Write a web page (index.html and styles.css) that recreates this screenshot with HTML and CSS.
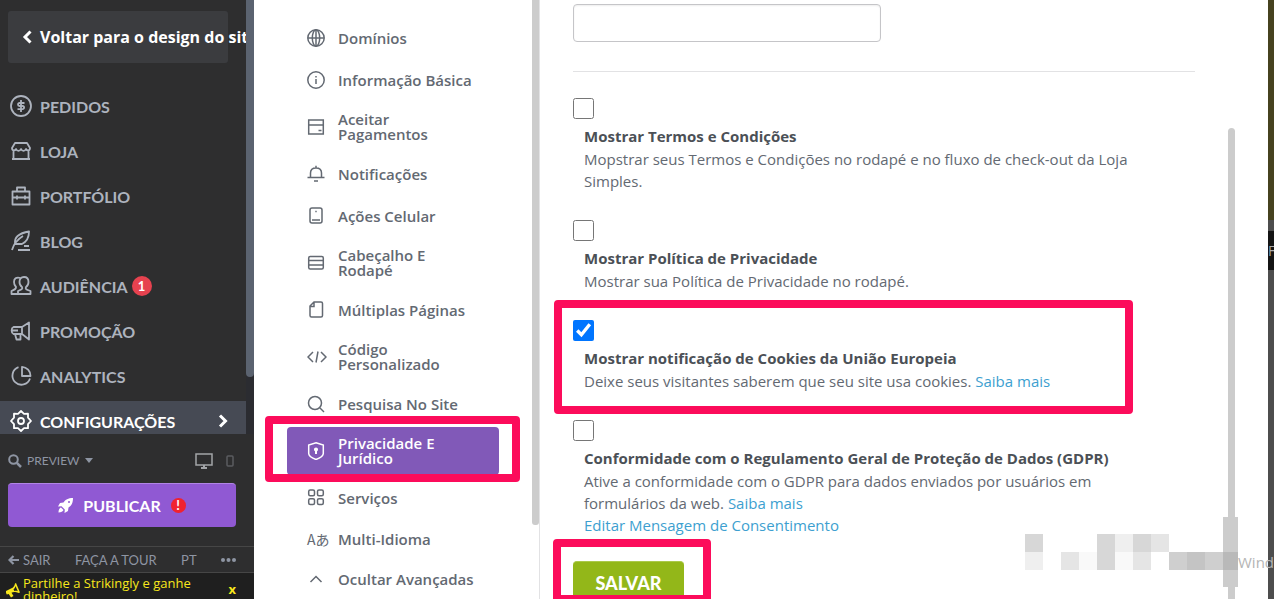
FILE: index.html
```html
<!DOCTYPE html>
<html lang="pt">
<head>
  <meta charset="UTF-8" />
  <meta name="viewport" content="width=device-width, initial-scale=1.0" />
  <title>Configurações - Privacidade e Jurídico</title>
  <link rel="stylesheet" href="styles.css">
</head>
<body>
  <div class="app">
    <aside class="sidebar">
      <div class="sidebar-scroll">
        <div class="sidebar-main">
          <a class="back-btn" href="#">
            <svg width="10" height="14" viewBox="0 0 10 14"><path d="M8.500 1.500 3 7l5.500 5.500" fill="none" stroke="currentColor" stroke-width="3"/></svg>
            Voltar para o design do site
          </a>
          <nav class="main-nav">
            <a href="#">
              <svg class="nav-icon" viewBox="0 0 22 22"><circle cx="11" cy="11" r="10"/><path d="M14.500 8H9.500a1.500 1.500 0 0 0 0 3h3a1.500 1.500 0 0 1 0 3.200H7.500M11 5v12"/></svg>
              PEDIDOS
            </a>
            <a href="#">
              <svg class="nav-icon" viewBox="0 0 22 22"><path d="M5 3h12l3 5c0 3-3 3-4 1-1 2.500-4 2.500-5 0-1 2.500-4 2.500-5 0-1 2-4 2-4-1zM3.500 10.500V19h15v-8.500M2 19h18"/></svg>
              LOJA
            </a>
            <a href="#">
              <svg class="nav-icon" viewBox="0 0 22 22"><path d="M2.500 6.500h17v13h-17zM7 6V2.500h8V6M2.500 12.500h17M7 10.500v4M15 10.500v4"/></svg>
              PORTFÓLIO
            </a>
            <a href="#">
              <svg class="nav-icon" viewBox="0 0 22 22"><path d="M2 20C4 13 8 9 13 6M5 14C4 7 10 3 19 1.500c0 5-2 10-7 12.500H5M14 16h5M8 20h12"/></svg>
              BLOG
            </a>
            <a href="#">
              <svg class="nav-icon" viewBox="0 0 22 22"><path d="M14 2c3 0 4.500 2 4.500 5 0 2-1 4-2.500 5-1 2 0 2.500 4.500 4v3H8v-3c3.500-1.500 5-2 4-4-1.500-1-2.500-3-2.500-5 0-3 1.500-5 4.500-5zM10.500 3C6 1.500 4 4 4 7c0 2 1 4 2 5 0 2-1 2.500-4.500 4v3H8"/></svg>
              AUDIÊNCIA <span class="badge">1</span>
            </a>
            <a href="#">
              <svg class="nav-icon" viewBox="0 0 22 22"><path d="M12 7H3.500C1 8 1 13 3.500 14H12M12 7l7-4.500v17L12 14zM5 14l1.500 5.500h4V14M2 10.500h6"/></svg>
              PROMOÇÃO
            </a>
            <a href="#">
              <svg class="nav-icon" viewBox="0 0 22 22"><path d="M8.500 2.200A9 9 0 1 0 20 13.500M12 1.800V11h8.500A9 9 0 0 0 12 1.800z"/></svg>
              ANALYTICS
            </a>
            <a class="active" href="#">
              <svg class="nav-icon" viewBox="0 0 22 22"><path d="M11 1l3 2.800 4-.1v4L21 11l-3 3.200v4l-4 0L11 21l-3-2.800-4 0v-4L1 11l3-3.300v-4l4 .1z"/><circle cx="11" cy="11" r="3"/></svg>
              CONFIGURAÇÕES
              <svg class="nav-arrow" width="10" height="14" viewBox="0 0 10 14"><path d="M2 1.500 7.500 7 2 12.500" fill="none" stroke="currentColor" stroke-width="3"/></svg>
            </a>
          </nav>
        </div>
        <div class="sidebar-track"><div class="sidebar-thumb"></div></div>
      </div>

      <div class="sidebar-bottom">
        <div class="preview-row">
          <button class="preview-btn">
            <svg width="14" height="14" viewBox="0 0 14 14"><circle cx="5.500" cy="5.500" r="4.300" fill="none" stroke="currentColor" stroke-width="2"/><path d="M8.800 8.800 13 13" stroke="currentColor" stroke-width="2.500"/></svg>
            PREVIEW
            <svg width="8" height="5" viewBox="0 0 8 5"><path d="M0 0h8L4 5z" fill="currentColor"/></svg>
          </button>
          <button class="device-btn" aria-label="Desktop">
            <svg width="18" height="16" viewBox="0 0 18 16"><path d="M1 1h16v11H1z" fill="none" stroke="currentColor" stroke-width="1.500"/><path d="M8 12h2v2h2v2H6v-2h2z" fill="currentColor"/></svg>
          </button>
          <button class="device-btn mobile" aria-label="Celular">
            <svg width="8" height="12" viewBox="0 0 8 12"><rect x="1" y="1" width="6" height="10" rx="1" fill="none" stroke="currentColor" stroke-width="1.500"/></svg>
          </button>
        </div>
        <button class="publish-btn">
          <svg width="15" height="15" viewBox="0 0 15 15" fill="currentColor"><path d="M15 0C10 0 7.500 1.500 5.500 4.500L2 5 0 8.500l3.500-.3 3.300 3.300-.3 3.500L10 13l.5-3.500C13.500 7.500 15 5 15 0zM3 9.500C1.500 10 .5 12 .5 14.500 3 14.500 5 13.500 5.500 12z"/><circle cx="11" cy="4" r="1" fill="#9059d3"/></svg>
          PUBLICAR
          <span class="alert-dot">!</span>
        </button>
        <div class="links-row">
          <a href="#"><svg width="11" height="10" viewBox="0 0 11 10"><path d="M5.500 1 1.500 5l4 4M1.500 5H11" fill="none" stroke="currentColor" stroke-width="2.200"/></svg> SAIR</a>
          <a href="#">FAÇA A TOUR</a>
          <a href="#">PT</a>
          <a href="#" aria-label="Mais"><svg width="15" height="4" viewBox="0 0 15 4" fill="currentColor"><circle cx="2" cy="2" r="2"/><circle cx="7.500" cy="2" r="2"/><circle cx="13" cy="2" r="2"/></svg></a>
        </div>
        <div class="promo">
          <svg width="14" height="15" viewBox="0 0 14 15" fill="currentColor"><path d="M10 0l4 9.500-1.500.5C9 8.500 7 9 5.500 9.700L7.500 13l-2.500 1.500L2.700 11 .8 11.500C0 10.500-.2 9.500 0 8l5-2.500C7.500 4.500 8.500 3 9 .5zM9.500 3c-.3 1.500-1 2.500-2 3.300l.8 1.700c1.200-.3 2.500-.2 3.500.3z"/></svg>
          <a href="#">Partilhe a Strikingly e ganhe dinheiro!</a>
          <button class="promo-close">x</button>
        </div>
      </div>
    </aside>

    <nav class="categories">
      <ul>
        <li><a href="#">
          <svg class="cat-icon" viewBox="0 0 18 18"><circle cx="9" cy="9" r="8.200"/><ellipse cx="9" cy="9" rx="3.700" ry="8.200"/><path d="M9 1v16M1 9h16"/></svg>
          <span>Domínios</span></a></li>
        <li><a href="#">
          <svg class="cat-icon" viewBox="0 0 18 18"><circle cx="9" cy="9" r="8.200"/><path d="M9 8v5M9 5v1.500"/></svg>
          <span>Informação Básica</span></a></li>
        <li><a href="#">
          <svg class="cat-icon" viewBox="0 0 18 18"><path d="M1.700 2h14.600v14H1.700zM2 7h14M11.500 12.500h3"/></svg>
          <span>Aceitar Pagamentos</span></a></li>
        <li><a href="#">
          <svg class="cat-icon" viewBox="0 0 18 18"><path d="M.5 12.500h17M3.500 12.500V8C3.500 4.500 6 3 9 3s5.500 1.500 5.500 5v4.500M9 .8V3M7 16h4"/></svg>
          <span>Notificações</span></a></li>
        <li><a href="#">
          <svg class="cat-icon" viewBox="0 0 18 18"><rect x="3" y="1" width="12" height="15" rx="2"/><path d="M5 13h8M8.300 4.500h1.400"/></svg>
          <span>Ações Celular</span></a></li>
        <li><a href="#">
          <svg class="cat-icon" viewBox="0 0 18 18"><rect x="1.700" y="2.500" width="14.600" height="12.500" rx="1.500"/><path d="M2 6.500h14M2 11h14"/></svg>
          <span>Cabeçalho E Rodapé</span></a></li>
        <li><a href="#">
          <svg class="cat-icon" viewBox="0 0 18 18"><path d="M7 1h7q1.500 0 1.500 1.500v12q0 1.500-1.500 1.500H4.500Q3 16 3 14.500V5zM7 1v4.500H3"/></svg>
          <span>Múltiplas Páginas</span></a></li>
        <li><a href="#">
          <svg class="cat-icon wide" viewBox="0 0 20 18"><path d="M6 4 1 9l5 5M14 4l5 5-5 5M11 3.500 9 14.500"/></svg>
          <span>Código Personalizado</span></a></li>
        <li><a href="#">
          <svg class="cat-icon" viewBox="0 0 18 18"><circle cx="8" cy="8" r="6.500"/><path d="m13 13 4 4"/></svg>
          <span>Pesquisa No Site</span></a></li>
        <li class="active"><a href="#">
          <svg class="cat-icon" viewBox="0 0 18 18"><path d="M9 .8 16.300 3v8.500c0 3-3.500 4.500-7.300 6-3.800-1.500-7.300-3-7.300-6V3z"/><path d="M9 7.500V12" stroke-width="2"/><circle cx="9" cy="7.500" r="1.300" fill="currentColor"/></svg>
          <span>Privacidade E Jurídico</span></a>
          <div class="marker"></div></li>
        <li><a href="#">
          <svg class="cat-icon" viewBox="0 0 18 18"><rect x="1.700" y="1" width="5.800" height="5.800" rx="1.500"/><rect x="10.500" y="1" width="5.800" height="5.800" rx="1.500"/><rect x="1.700" y="9.800" width="5.800" height="5.800" rx="1.500"/><rect x="10.500" y="9.800" width="5.800" height="5.800" rx="1.500"/></svg>
          <span>Serviços</span></a></li>
        <li class="compact"><a href="#">
          <span class="lang-icon">Aあ</span>
          <span>Multi-Idioma</span></a></li>
        <li class="compact"><a href="#">
          <svg class="cat-icon" viewBox="0 0 18 18"><path d="m3.500 12 5.500-5.500L14.500 12"/></svg>
          <span>Ocultar Avançadas</span></a></li>
      </ul>
      <div class="cat-thumb"></div>
    </nav>

    <main class="settings">
      <form class="settings-form">
        <input class="text-field" type="text" aria-label="Código" />
        <hr />
        <div class="option">
          <input type="checkbox" id="terms" />
          <label for="terms">Mostrar Termos e Condições</label>
          <p>Mopstrar seus Termos e Condições no rodapé e no fluxo de check-out da Loja Simples.</p>
        </div>
        <div class="option">
          <input type="checkbox" id="privacy" />
          <label for="privacy">Mostrar Política de Privacidade</label>
          <p>Mostrar sua Política de Privacidade no rodapé.</p>
        </div>
        <div class="option">
          <input type="checkbox" id="cookies" checked />
          <label for="cookies">Mostrar notificação de Cookies da União Europeia</label>
          <p>Deixe seus visitantes saberem que seu site usa cookies. <a href="#">Saiba mais</a></p>
          <div class="marker"></div>
        </div>
        <div class="option">
          <input type="checkbox" id="gdpr" />
          <label for="gdpr">Conformidade com o Regulamento Geral de Proteção de Dados (GDPR)</label>
          <p>Ative a conformidade com o GDPR para dados enviados por usuários em formulários da web. <a href="#">Saiba mais</a></p>
          <p><a href="#">Editar Mensagem de Consentimento</a></p>
        </div>
        <div class="save-wrap">
          <button class="save-btn" type="button">SALVAR</button>
          <div class="marker"></div>
        </div>
      </form>
      <div class="settings-thumb"></div>
    </main>

    <div class="page-edge"><div class="edge-top"></div><div class="edge-bar">F</div></div>
  </div>

  <div class="watermark">
    <div class="mosaic">
      <i class="g3"></i><i></i><i></i><i></i><i class="g3"></i><i class="g1"></i><i class="g3"></i><i class="g2"></i><i></i><i></i><i></i><i></i>
      <i class="g1"></i><i></i><i class="g2"></i><i class="g0"></i><i class="g3"></i><i class="g0"></i><i class="g2"></i><i></i><i class="g4"></i><i class="g5"></i><i class="g4"></i><i class="g6"></i>
    </div>
    <span>Windows</span>
  </div>
</body>
</html>
```
FILE: styles.css
```css
* { box-sizing: border-box; }
body { margin: 0; font-family: "Open Sans", "Noto Sans", sans-serif; font-size: 15px; color: #636972; background: #fff; overflow: hidden; }
a { color: inherit; text-decoration: none; }
button { font: inherit; color: inherit; background: none; border: none; padding: 0; }
svg { flex: none; }
.app { display: grid; grid-template-columns: 254px 286px 1fr 6px; grid-template-rows: 100%; height: 100vh; overflow: hidden; }

/* left sidebar */
.sidebar { display: flex; flex-direction: column; min-height: 0; background: #2e2e2f; color: #adb3be; font-family: Lato, sans-serif; }
.sidebar-scroll { flex: 1; min-height: 0; display: flex; overflow: hidden; }
.sidebar-main { flex: 1; min-width: 0; overflow: hidden; padding-top: 11px; }
.sidebar-track { width: 8px; background: #2b2c31; }
.sidebar-thumb { height: 377px; background: #5b6370; border-radius: 0 0 4px 4px; }
.back-btn { display: flex; align-items: center; gap: 8px; height: 52px; margin: 0 18px 23px 8px; padding-left: 14px; background: #3b3c3f; border-radius: 3px; color: #fff; font: bold 16px "Open Sans", sans-serif; white-space: nowrap; }
.main-nav a { display: flex; align-items: center; gap: 8px; height: 40px; margin-bottom: 5px; padding: 0 18px 0 10px; font-size: 16px; font-weight: bold; }
.main-nav .active { background: #464a54; color: #fff; }
.nav-icon { width: 22px; height: 22px; fill: none; stroke: currentColor; stroke-width: 1.800; stroke-linejoin: round; }
.nav-arrow { margin-left: auto; }
.badge { width: 20px; height: 20px; margin-left: -4px; border-radius: 50%; background: #e6424f; color: #fff; font-size: 13px; line-height: 20px; text-align: center; }

.preview-row { display: flex; align-items: center; height: 49px; padding: 4px 20px 0 8px; }
.preview-btn { display: flex; align-items: center; gap: 5px; margin-right: auto; color: #8e95a3; font-size: 12px; }
.device-btn { display: flex; margin-left: 13px; color: #a3a5a8; }
.device-btn.mobile { color: #5b5c60; }
.publish-btn { display: flex; align-items: center; justify-content: center; gap: 10px; width: calc(100% - 26px); height: 44px; margin: 0 18px 19px 8px; background: #9059d3; border-top: 1px solid #b184e6; border-radius: 4px; color: #fff; font-size: 16px; font-weight: bold; }
.alert-dot { width: 15px; height: 15px; border-radius: 50%; background: #f02230; font-size: 13px; line-height: 15px; }
.links-row { display: flex; align-items: center; justify-content: space-between; height: 27px; padding: 0 18px 0 8px; border-top: 1px solid #464646; border-bottom: 1px solid #464646; color: #8e95a3; font-size: 13px; }
.links-row a { display: flex; align-items: center; gap: 4px; }
.promo { display: flex; align-items: flex-start; gap: 3px; height: 26px; padding: 4px 18px 0 6px; overflow: hidden; background: #1f1f1f; color: #f8e71c; font: 13px/13px "Open Sans", sans-serif; }
.promo svg { margin-top: 6px; }
.promo a { flex: 1; }
.promo-close { margin-top: 6px; font-weight: bold; }

/* settings categories */
.categories { position: relative; border-right: 1px solid #e2e2e4; font-weight: 600; }
.categories ul { list-style: none; margin: 0; padding: 19px 40px 0 33px; display: flex; flex-direction: column; gap: 4px; }
.categories li { position: relative; }
.categories li a { display: flex; align-items: center; gap: 13px; min-height: 38px; padding: 9px 19px 9px 20px; line-height: 15px; border-radius: 4px; }
.categories li a span:last-child { flex: 1; }
.categories .compact a { min-height: 36px; }
.categories .active a { background: #8159b8; color: #fff; }
.cat-icon { width: 18px; height: 18px; fill: none; stroke: currentColor; stroke-width: 1.500; }
.cat-icon.wide { width: 20px; margin-right: -2px; }
.lang-icon { width: 18px; font: 400 14px/15px "Noto Sans CJK JP", sans-serif; white-space: nowrap; }
.cat-thumb { position: absolute; top: 0; right: 0; width: 7px; height: 525px; background: #ccc; border-radius: 0 0 3px 3px; }

/* pink frames drawn over the highlighted parts */
.marker { position: absolute; border: 8px solid #fc0c5b; border-radius: 4px; pointer-events: none; }
.categories .marker { inset: -11px -21px -7px -22px; }
.option .marker { inset: -20px 62px -22px -19px; }
.save-wrap .marker { inset: -22px -27px 0 -20px; }

/* settings form */
.settings { position: relative; min-width: 0; }
.settings-form { padding: 4px 73px 0 33px; }
.text-field { display: block; width: 308px; height: 38px; padding: 8px; border: 1px solid #c5c5c8; border-radius: 4px; box-shadow: inset 0 1px 2px #eee; }
hr { margin: 29px 0 26px; border: none; border-top: 1px solid #e2e2e4; }
.option { position: relative; margin-bottom: 28px; }
.option input { display: block; width: 21px; height: 21px; margin: 0 0 6px; }
.option label { display: block; margin-bottom: 1px; padding-left: 11px; line-height: 22px; font-weight: bold; color: #4b5056; }
.option p { margin: 0; padding-left: 11px; padding-right: 40px; line-height: 22px; }
.option p a { color: #3d9fd0; }
.option:nth-last-child(2) { margin-bottom: 25px; }
.save-wrap { position: relative; width: 111px; height: 42px; }
.save-btn { width: 100%; height: 42px; background: #93b719; border-top: 1px solid #abc94b; border-radius: 4px; color: #fff; font: 900 18px Lato, sans-serif; }
.settings-thumb { position: absolute; top: 128px; bottom: 0; right: 33px; width: 7px; background: #ccc; border-radius: 4px 4px 0 0; }

.page-edge { background: #4d4d4d; overflow: hidden; }
.edge-top { height: 220px; background: #46421f; margin-bottom: 11px; }
.edge-bar { height: 39px; background: #141414; color: #aaa; font-size: 14px; line-height: 39px; }

/* activation watermark at the corner of the screen */
.watermark { position: absolute; right: 0; bottom: 12px; width: 249px; height: 70px; display: flex; align-items: center; overflow: hidden; color: #b5b5b5; }
.watermark::before { content: ""; position: absolute; left: 198px; top: 0; width: 15px; height: 70px; background: #ccc; }
.watermark span { margin-top: 20px; }
.mosaic { position: relative; flex: none; display: grid; grid-template-columns: repeat(11, 18px) 15px; grid-auto-rows: 18px; }
.g0 { background: #f9f9f9; }
.g1 { background: #efefef; }
.g2 { background: #e5e5e5; }
.g3 { background: #d7d7d7; }
.g4 { background: #cfcfcf; }
.g5 { background: #c4c4c4; }
.g6 { background: #b9b9b9; }
```
